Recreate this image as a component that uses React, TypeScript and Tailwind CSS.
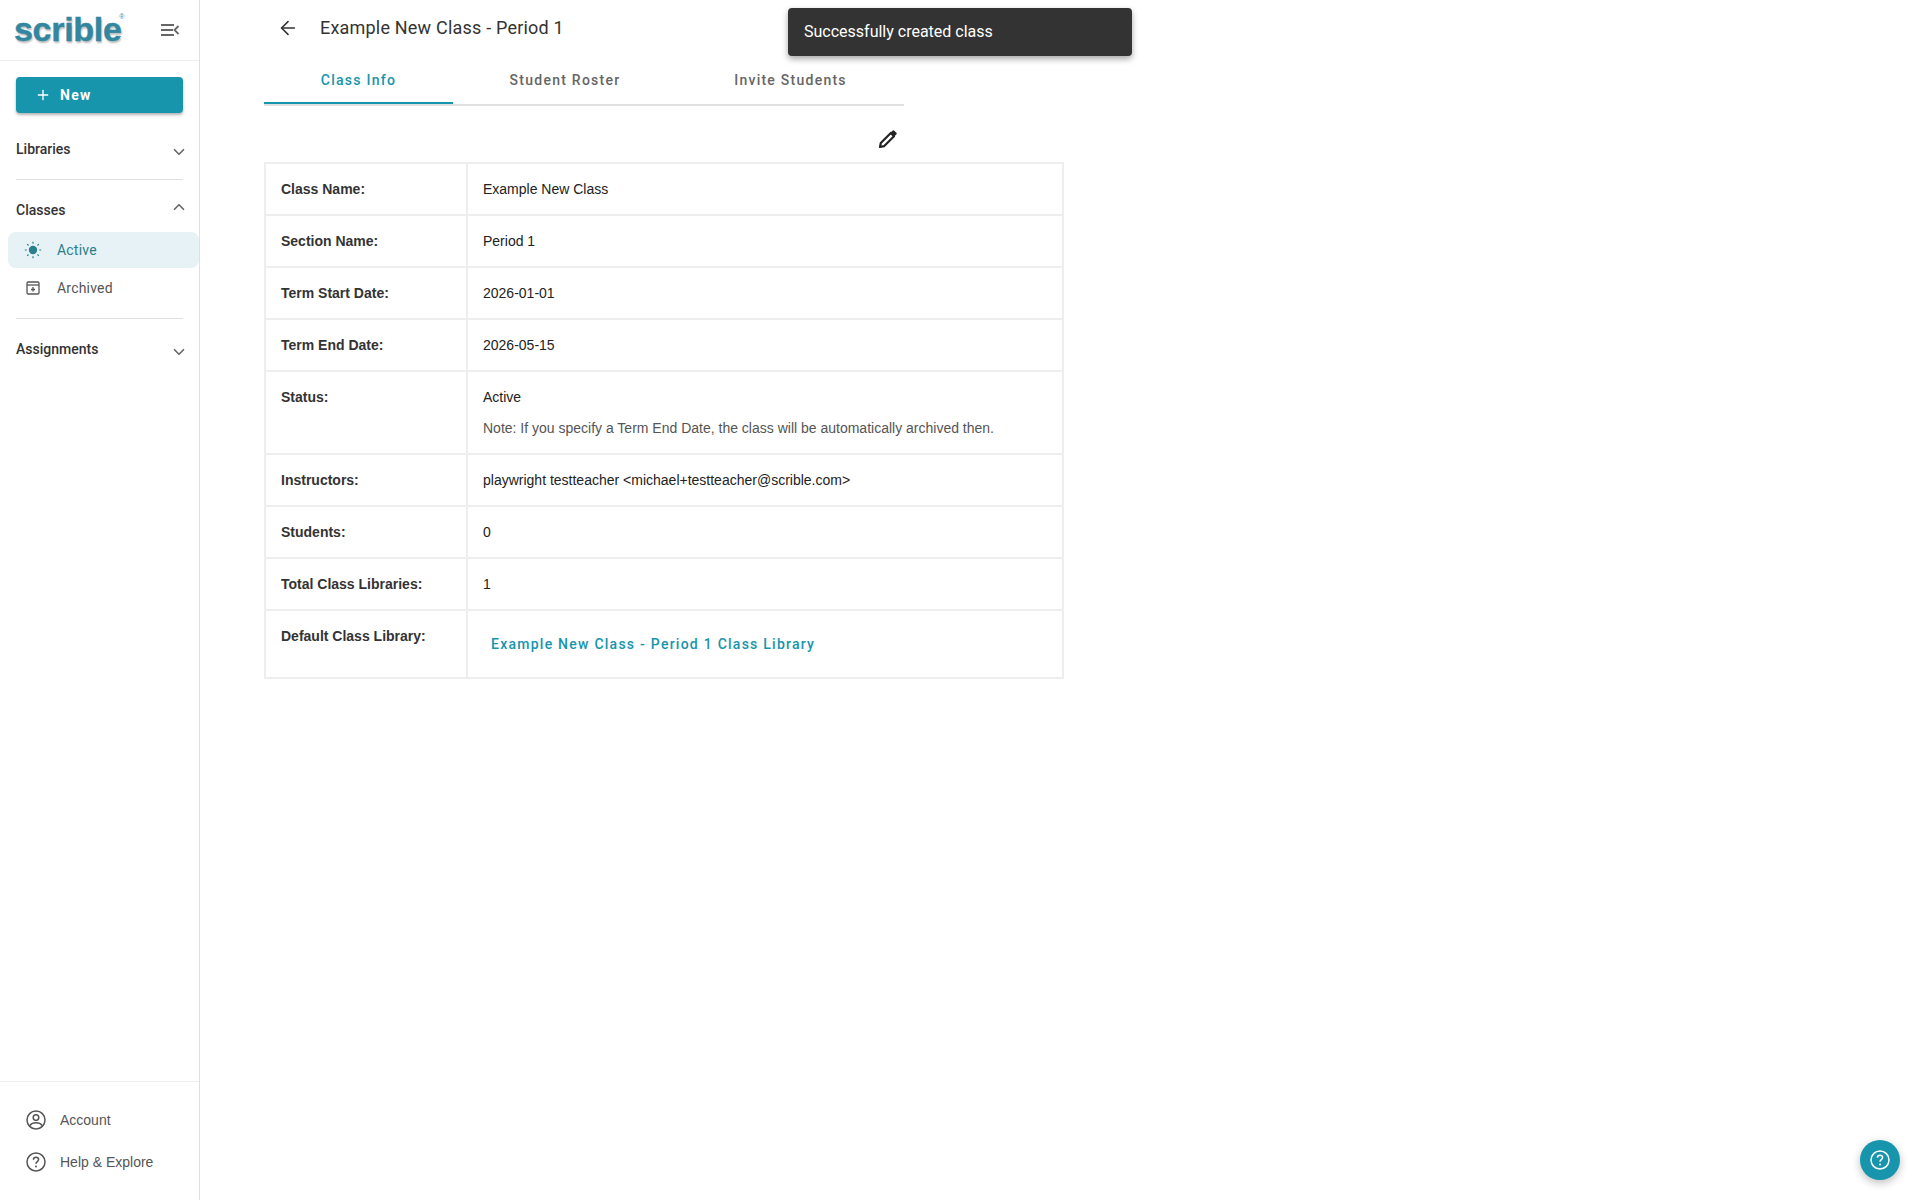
import React from "react";
import { ArrowLeft, ChevronDown, ChevronUp, Plus } from "lucide-react";

const rows = [
  { label: "Class Name:", value: "Example New Class" },
  { label: "Section Name:", value: "Period 1" },
  { label: "Term Start Date:", value: "2026-01-01" },
  { label: "Term End Date:", value: "2026-05-15" },
  {
    label: "Status:",
    value: "Active",
    note: "Note: If you specify a Term End Date, the class will be automatically archived then.",
  },
  { label: "Instructors:", value: "playwright testteacher <michael+testteacher@scrible.com>" },
  { label: "Students:", value: "0" },
  { label: "Total Class Libraries:", value: "1" },
];

const SectionHeader = ({ title, open }: { title: string; open?: boolean }) => (
  <div className="flex items-center justify-between pl-4 pr-[11px] h-6">
    <span className="font-['Roboto',sans-serif] text-[14px] font-medium text-[#333]">{title}</span>
    {open ? (
      <ChevronUp className="w-[18px] h-[18px] text-[#666] -mt-[7px]" strokeWidth={2.2} />
    ) : (
      <ChevronDown className="w-[18px] h-[18px] text-[#666] mt-[5px]" strokeWidth={2.2} />
    )}
  </div>
);

const Divider = () => <div className="mx-4 h-px bg-[#e0e0e0]" />;

const MenuCollapseIcon = () => (
  <svg width="20" height="14" viewBox="0 0 20 14" fill="none" stroke="#666" strokeWidth="1.8">
    <path d="M1 2h13M1 7h12M1 12h13" />
    <path d="M18.5 3 14.5 7l4 4" />
  </svg>
);

const SunIcon = () => (
  <svg width="18" height="18" viewBox="0 0 18 18" fill="#2b7f8c" stroke="#2b7f8c">
    <circle cx="9" cy="9" r="4.2" stroke="none" />
    <path
      d="M9 .8v2M9 15.2v2M.8 9h2M15.2 9h2M3.2 3.2l1.3 1.3M13.5 13.5l1.3 1.3M3.2 14.8l1.3-1.3M13.5 4.5l1.3-1.3"
      strokeWidth="1.2"
      fill="none"
    />
  </svg>
);

const ArchiveIcon = () => (
  <svg width="14" height="14" viewBox="0 0 14 14" fill="none" stroke="#555" strokeWidth="1.3">
    <rect x="1" y="1" width="12" height="12" rx="1.2" />
    <path d="M1 4h12" />
    <path d="M7 6v4.5M5 8.5h4" />
  </svg>
);

const AccountIcon = () => (
  <svg width="20" height="20" viewBox="0 0 20 20" fill="none" stroke="#555" strokeWidth="1.5">
    <circle cx="10" cy="10" r="9" />
    <circle cx="10" cy="7.6" r="2.8" />
    <path d="M3.8 15.6c1.4-2 3.6-2.8 6.2-2.8s4.8.8 6.2 2.8" />
  </svg>
);

const HelpIcon = ({ color, size }: { color: string; size: number }) => (
  <svg width={size} height={size} viewBox="0 0 20 20" fill="none" stroke={color} strokeWidth="1.5">
    <circle cx="10" cy="10" r="9" />
    <path d="M7.4 7.8c0-1.5 1.1-2.5 2.6-2.5s2.6 1 2.6 2.3c0 2-2.6 2-2.6 4.2" />
    <circle cx="10" cy="14.6" r="1" fill={color} stroke="none" />
  </svg>
);

// pencil with a solid head, as in the reference
const EditIcon = () => (
  <svg width="20" height="20" viewBox="0 0 20 20" fill="none" stroke="#222" strokeWidth="2.2" strokeLinejoin="round">
    <path d="M2 18l.8-4L12.8 4l3.2 3.2-10 10z" />
    <path d="M14.2 2.4c.8-.8 1.6-.8 2.3-.1l1.2 1.2c.7.7.7 1.5-.1 2.3l-1.4 1.4-3.4-3.4z" fill="#222" strokeWidth="1" />
  </svg>
);

export default function App() {
  return (
    <div className="flex h-[1200px] bg-white overflow-hidden font-['Liberation_Sans',sans-serif]">
      {/* Sidebar */}
      <aside className="w-[200px] shrink-0 border-r border-[#e0e0e0] flex flex-col">
        <div className="h-[61px] shrink-0 border-b border-[#eeeeee] flex items-center justify-between pl-[14px] pr-[19px]">
          <div className="relative -mt-[1px]">
            <span className="font-['Liberation_Sans',sans-serif] font-bold text-[34px] leading-none tracking-[-0.3px] text-[#33869f] [-webkit-text-stroke:0.4px_#33869f] [text-shadow:1px_2px_2px_#bbb]">
              scrible
            </span>
            <span className="absolute -right-[3px] top-[1px] text-[7px] leading-none text-[#33869f]">®</span>
          </div>
          <MenuCollapseIcon />
        </div>

        <div className="px-4 pt-4">
          <button className="w-full h-9 rounded bg-[#1695ac] text-white flex items-center pl-[19px] gap-[9px] shadow-[0_2px_3px_rgba(0,0,0,0.3)] font-['Roboto',sans-serif] text-[14px] font-bold tracking-[1.25px]">
            <Plus className="w-4 h-4" strokeWidth={2} />
            New
          </button>
        </div>

        <div className="pt-[24px]">
          <SectionHeader title="Libraries" />
        </div>
        <div className="pt-[18px]">
          <Divider />
        </div>
        <div className="pt-[18px] pb-[10px]">
          <SectionHeader title="Classes" open />
        </div>
        <div className="ml-2 h-9 rounded-lg bg-[#e7f2f7] flex items-center pl-[16px] gap-[15px] text-[#2b7f8c] font-['Roboto',sans-serif] text-[14px] tracking-[0.2px]">
          <SunIcon />
          Active
        </div>
        <div className="ml-2 h-[40px] flex items-center pl-[18px] gap-[17px] text-[#555] font-['Roboto',sans-serif] text-[14px] tracking-[0.2px]">
          <ArchiveIcon />
          Archived
        </div>
        <div className="pt-[10px]">
          <Divider />
        </div>
        <div className="pt-[18px]">
          <SectionHeader title="Assignments" />
        </div>

        <div className="mt-auto border-t border-[#eeeeee] pt-[28px] pb-[28px] px-[26px] flex flex-col gap-[22px] text-[14px] text-[#555]">
          <div className="flex items-center gap-[14px] h-5">
            <AccountIcon />
            Account
          </div>
          <div className="flex items-center gap-[14px] h-5">
            <HelpIcon color="#555" size={20} />
            Help &amp; Explore
          </div>
        </div>
      </aside>

      {/* Main */}
      <main className="flex-1 pl-[64px] relative">
        <div className="w-[640px]">
          <div className="flex items-center h-[56px] pl-[13px] gap-[21px]">
            <ArrowLeft className="w-[22px] h-[22px] text-[#333]" strokeWidth={1.7} />
            <h1 className="font-['Roboto',sans-serif] text-[18px] font-normal tracking-[0.2px] text-[#333] -mt-[1px]">
              Example New Class - Period 1
            </h1>
          </div>
          <div className="flex h-[50px] border-b-2 border-[#e0e0e0] font-['Roboto',sans-serif] text-[14px] tracking-[1.25px]">
            <div className="w-[189px] border-b-2 border-[#1695ac] text-[#1695ac] flex justify-center pt-[14px] font-medium">
              Class Info
            </div>
            <div className="w-[224px] text-[#666] flex justify-center pt-[14px] font-medium">Student Roster</div>
            <div className="w-[227px] text-[#666] flex justify-center pt-[14px] font-medium">Invite Students</div>
          </div>
          <div className="flex justify-end h-[56px] pt-[23px] pr-[6px]">
            <EditIcon />
          </div>
        </div>

        <table className="w-[800px] border-collapse border-2 border-[#eeeeee] text-[14px] text-[#222] table-fixed">
          <tbody>
            {rows.map((row) => (
              <tr key={row.label} className="border-b-2 border-[#eeeeee]">
                <td className="w-[202px] border-r-2 border-[#eeeeee] align-top pl-[15px] pt-[17px] pb-[16px] font-bold text-[#333] leading-[17px]">
                  {row.label}
                </td>
                <td className="align-top pl-[15px] pt-[17px] pb-[16px] leading-[17px]">
                  {row.value}
                  {row.note && <div className="mt-[14px] text-[#555]">{row.note}</div>}
                </td>
              </tr>
            ))}
            <tr>
              <td className="border-r-2 border-[#eeeeee] align-top pl-[15px] pt-[17px] font-bold text-[#333] leading-[17px]">
                Default Class Library:
              </td>
              <td className="h-[68px] align-middle pl-[23px] font-['Roboto',sans-serif] text-[#1695ac] font-medium tracking-[1.25px]">
                Example New Class - Period 1 Class Library
              </td>
            </tr>
          </tbody>
        </table>

        {/* Toast */}
        <div className="absolute left-[588px] top-2 w-[344px] h-12 rounded bg-[#333333] text-white flex items-center pl-4 font-['Roboto',sans-serif] text-[16px] shadow-[0_3px_6px_rgba(0,0,0,0.35)]">
          Successfully created class
        </div>

        {/* Help bubble */}
        <div className="absolute right-[20px] bottom-[20px] w-10 h-10 rounded-full bg-[#1695ac] flex items-center justify-center shadow-[0_3px_8px_rgba(0,0,0,0.25)]">
          <HelpIcon color="#ffffff" size={20} />
        </div>
      </main>
    </div>
  );
}
